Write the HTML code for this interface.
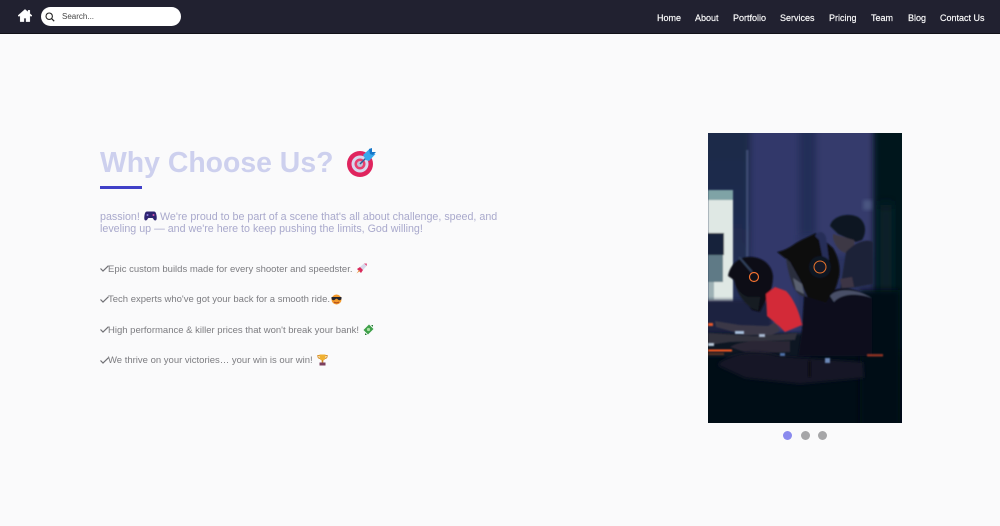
<!DOCTYPE html>
<html lang="en">
<head>
<meta charset="utf-8">
<title>Why Choose Us</title>
<style>
*{box-sizing:border-box;margin:0;padding:0}
html,body{width:1000px;height:526px;overflow:hidden;background:#fafafb;font-family:"Liberation Sans",sans-serif}
.abs{position:absolute}
header{position:absolute;left:0;top:0;width:1000px;height:34px;background:#212130;border-bottom:1px solid #111118}
.search{position:absolute;left:41px;top:7px;width:140px;height:19px;background:#fff;border-radius:10px}
.search span{position:absolute;left:21px;top:4px;font-size:8px;line-height:11px;color:#444}
nav a{position:absolute;top:12px;font-size:9px;line-height:12px;color:#fff;white-space:nowrap;text-decoration:none;-webkit-text-stroke:.15px #fff}
h1{position:absolute;left:100px;top:146px;font-size:28.4px;line-height:34px;font-weight:700;color:#cdd0ee;white-space:nowrap}
.bar{position:absolute;left:100px;top:186px;width:42px;height:2.500px;background:#4040c8}
.p{position:absolute;left:100px;font-size:10.7px;line-height:12px;color:#a9a9cc;white-space:nowrap}
.li{position:absolute;left:108px;font-size:9.5px;line-height:12px;color:#7c7c80;white-space:nowrap}
.dot{position:absolute;top:431px;width:9px;height:9px;border-radius:50%;background:#a6a6a8}
</style>
</head>
<body>
<header>
<svg class="abs" style="left:18px;top:9px" width="14" height="13" viewBox="0 0 16 14"><path d="M8 0 L0 7 L1 8.200 L2.500 7 V14 H6.800 V10 H9.200 V14 H13.500 V7 L15 8.200 L16 7 L13.500 4.800 V1 H11.500 V3 Z" fill="#fff" stroke="#fff" stroke-width=".5"/></svg>
<div class="search">
<svg class="abs" style="left:4px;top:5px" width="10" height="10" viewBox="0 0 10 10"><circle cx="4.200" cy="4.200" r="3.200" fill="none" stroke="#222" stroke-width="1.100"/><path d="M6.600 6.600 L9.200 9.200" stroke="#222" stroke-width="1.200"/></svg>
<span>Search...</span>
</div>
<nav>
<a href="#" style="left:657px">Home</a>
<a href="#" style="left:695px">About</a>
<a href="#" style="left:733px">Portfolio</a>
<a href="#" style="left:780px">Services</a>
<a href="#" style="left:829px">Pricing</a>
<a href="#" style="left:871px">Team</a>
<a href="#" style="left:908px">Blog</a>
<a href="#" style="left:940px">Contact Us</a>
</nav>
</header>

<h1>Why Choose Us?</h1>
<svg class="abs" style="left:345px;top:148px" width="31" height="30" viewBox="0 0 31 30">
<circle cx="15" cy="16" r="13" fill="#e0245e"/>
<circle cx="15" cy="16" r="8.500" fill="#d8d8ee"/>
<circle cx="15" cy="16" r="5.500" fill="#e8406e"/>
<circle cx="15" cy="16" r="3" fill="#c0c2d8"/>
<path d="M15 16 L25 6" stroke="#2a5f9a" stroke-width="1.500"/>
<path d="M18 7 L25 0.500 L26 5 L30.500 6 L24 13 L21 12 Z" fill="#38a8ec"/>
<path d="M24 1 L27 0 L27 4 L31 4 L28 7 L25 6 Z" fill="#1676c8"/>
</svg>
<div class="bar"></div>

<div class="p" style="top:211px">passion!</div>
<svg class="abs" style="left:144px;top:211px" width="13" height="10" viewBox="0 0 13 10"><path d="M3 0.500 H10 C11.500 0.500 12.200 2 12.600 5 C13 8 12.500 9.500 11.200 9.500 C9.800 9.500 9.500 7.500 8.500 7 H4.500 C3.500 7.500 3.200 9.500 1.800 9.500 C0.500 9.500 0 8 0.400 5 C0.800 2 1.500 0.500 3 0.500 Z" fill="#2e2470"/><circle cx="3.500" cy="4" r="1" fill="#8f7ce0"/><circle cx="9.500" cy="4" r="1" fill="#d65bb0"/></svg>
<div class="p" style="top:211px;left:160px">We're proud to be part of a scene that's all about challenge, speed, and</div>
<div class="p" style="top:223px">leveling up — and we're here to keep pushing the limits, God willing!</div>

<svg class="abs" style="left:100px;top:265px" width="9" height="7" viewBox="0 0 9 7"><path d="M0.500 3.500 L3 6 L8.500 0.700" fill="none" stroke="#6f6f74" stroke-width="1.200"/></svg>
<div class="li" style="top:264px">Epic custom builds made for every shooter and speedster.</div>
<svg class="abs" style="left:356px;top:263px" width="11" height="11" viewBox="0 0 11 11"><path d="M4 4 L8 0.500 L10.500 3 L7 7 Z" fill="#d8d8ea"/><path d="M8 0.500 H10.800 V3 Z" fill="#e0457a"/><path d="M1 6 L4 4 L7 7 L5 10 Z" fill="#d92a5c"/><path d="M0.500 10.500 L3 7 L4 8 Z" fill="#e8963a"/></svg>

<svg class="abs" style="left:100px;top:296px" width="9" height="7" viewBox="0 0 9 7"><path d="M0.500 3.500 L3 6 L8.500 0.700" fill="none" stroke="#6f6f74" stroke-width="1.200"/></svg>
<div class="li" style="top:294px">Tech experts who've got your back for a smooth ride.</div>
<svg class="abs" style="left:331px;top:294px" width="11" height="11" viewBox="0 0 11 11"><circle cx="5.500" cy="5.500" r="5" fill="#f39a2c"/><path d="M0.500 3 H10.500 V4.500 C10.500 6 8.500 6.500 7.500 6 L6 4.800 H5 L3.500 6 C2.500 6.500 0.500 6 0.500 4.500 Z" fill="#26242c"/><path d="M3 8 Q5.500 9.800 8 8" fill="none" stroke="#a5401e"/></svg>

<svg class="abs" style="left:100px;top:326px" width="9" height="7" viewBox="0 0 9 7"><path d="M0.500 3.500 L3 6 L8.500 0.700" fill="none" stroke="#6f6f74" stroke-width="1.200"/></svg>
<div class="li" style="top:325px">High performance &amp; killer prices that won't break your bank!</div>
<svg class="abs" style="left:363px;top:324px" width="11" height="11" viewBox="0 0 11 11"><path d="M0.500 6 L6 0.500 L10.500 5 L5 10.500 Z" fill="#3fa04a"/><circle cx="5.500" cy="5.500" r="1.600" fill="#a8e0a0"/><path d="M2 9 L4 11 H2 Z M8 1 L10 3 V1 Z" fill="#237a34"/></svg>

<svg class="abs" style="left:100px;top:357px" width="9" height="7" viewBox="0 0 9 7"><path d="M0.500 3.500 L3 6 L8.500 0.700" fill="none" stroke="#6f6f74" stroke-width="1.200"/></svg>
<div class="li" style="top:355px">We thrive on your victories… your win is our win!</div>
<svg class="abs" style="left:317px;top:354px" width="11" height="12" viewBox="0 0 11 12"><path d="M2.500 0.500 H8.500 V3 C8.500 5.500 7 6.500 5.500 6.500 C4 6.500 2.500 5.500 2.500 3 Z" fill="#f0b030"/><path d="M2.500 1.500 H0.800 C0.800 4 2 4.500 3 4.500 M8.500 1.500 H10.200 C10.200 4 9 4.500 8 4.500" fill="none" stroke="#d8922a"/><rect x="4.700" y="6" width="1.600" height="2.500" fill="#c98526"/><rect x="2.500" y="8.500" width="6" height="3" fill="#7c3f5e"/></svg>

<svg class="abs" style="left:708px;top:133px" width="194" height="290" viewBox="708 133 194 290">
<defs>
<filter id="b05" x="-20%" y="-20%" width="140%" height="140%"><feGaussianBlur stdDeviation="0.800"/></filter>
<filter id="b1" x="-20%" y="-20%" width="140%" height="140%"><feGaussianBlur stdDeviation="1.800"/></filter>
<filter id="b2" x="-30%" y="-30%" width="160%" height="160%"><feGaussianBlur stdDeviation="3"/></filter>
<filter id="b3" x="-30%" y="-30%" width="160%" height="160%"><feGaussianBlur stdDeviation="6"/></filter>
<linearGradient id="left" x1="0" y1="0" x2="0" y2="1"><stop offset="0" stop-color="#1a2a48"/><stop offset="1" stop-color="#262f58"/></linearGradient>
</defs>
<rect x="708" y="133" width="194" height="290" fill="#2b3360"/>
<g filter="url(#b2)">
<rect x="700" y="125" width="50" height="220" fill="url(#left)"/>
<rect x="752" y="125" width="46" height="220" fill="#31376a"/>
<rect x="800" y="125" width="15" height="110" fill="#242d58"/>
<rect x="817" y="125" width="56" height="130" fill="#353a6c"/>
</g>
<g filter="url(#b05)">
<rect x="746" y="150" width="2.500" height="170" fill="#54648e" opacity=".55"/>
<rect x="708" y="190" width="25" height="11" fill="#7fa3a6"/>
<rect x="708" y="200" width="25" height="102" fill="#dfe8e4"/>
<rect x="708" y="233" width="16" height="22" fill="#13233a"/>
<rect x="708" y="255" width="15" height="27" fill="#5f7a86"/>
<rect x="708" y="282" width="6" height="18" fill="#9db0b4"/>
</g>
<rect x="874" y="125" width="40" height="310" fill="#04191f" filter="url(#b2)"/>
<rect x="880" y="205" width="12" height="120" fill="#0a272f" filter="url(#b3)"/>
<rect x="863" y="200" width="9" height="10" fill="#5e6f96" opacity=".5" filter="url(#b1)"/>

<!-- lower backdrop -->
<rect x="700" y="300" width="72" height="34" fill="#1c2440" filter="url(#b1)"/>
<rect x="700" y="352" width="210" height="80" fill="#060e18" filter="url(#b2)"/>
<rect x="700" y="333" width="110" height="24" fill="#0e1422" filter="url(#b1)"/>
<rect x="860" y="290" width="40" height="140" fill="#050f15" filter="url(#b2)"/>

<g filter="url(#b05)">
<!-- back man -->
<path d="M830 226 C832 216 848 212 858 217 C866 222 867 232 862 240 L856 242 L838 234 Z" fill="#0e1424"/>
<path d="M833 234 L854 240 C856 246 850 252 846 253 C840 252 835 246 833 238 Z" fill="#3c3844"/>
<path d="M846 252 C854 243 866 238 873 242 L873 284 L840 290 Z" fill="#1e2438"/>
<path d="M840 279 L852 277 L854 287 L842 288 Z" fill="#3c3644"/>
<!-- front man head -->
<path d="M777 252 C786 250 790 247 796 243 C803 239 810 236 816 233 L833 248 C838 256 842 270 838 280 C836 290 830 300 826 303 L808 298 L800 280 L790 262 Z" fill="#08090f"/>
<path d="M786 258 L790 262 L800 280 L806 297 C800 297 796 292 793 286 C790 278 787 268 786 258 Z" fill="#2c2d3e"/>
<path d="M793 278 L802 284 L804 294 L796 290 Z" fill="#5a6070"/>
<path d="M815 236 C818 230 824 231 826 237 L829 260 L823 260 L819 240 Z" fill="#262d58"/>
<circle cx="820" cy="267" r="11" fill="#0e1424"/>
<!-- front man body -->
<path d="M804 296 L826 303 L834 290 C846 286 860 290 872 298 L872 356 L798 356 L802 330 Z" fill="#08101c"/>
<path d="M830 296 C836 288 856 288 872 298 C858 293 842 293 834 302 Z" fill="#484f68"/>
<!-- left man -->
<path d="M728 276 C730 263 742 255 753 257 C763 258 772 265 773 276 C773 284 771 292 768 296 L760 312 L752 310 C745 300 738 294 734 280 Z" fill="#0c1018"/>
<path d="M734 280 C736 288 742 296 748 297 L760 297 L758 310 C748 308 738 298 734 280 Z" fill="#181a24"/>
<path d="M739 257 L752 272" stroke="#33405c" stroke-width="2"/>
<!-- arms -->
<path d="M715 321 L740 325 L768 326 L776 322 L780 331 L772 335 L745 335 L716 327 Z" fill="#3a3746"/>
<path d="M708 333 L755 336 L797 333 L795 340 L730 342 L708 345 Z" fill="#33313e"/>
<path d="M730 347 C745 338 770 342 790 341 L790 352 L765 353 L745 352 Z" fill="#2a2736"/>
<!-- red shirt -->
<path d="M766 294 L775 287 L786 291 C795 300 800 315 802 325 L785 332 L778 325 L767 316 Z" fill="#d32c38"/>
</g>
<g filter="url(#b1)">
<path d="M717 365 C730 352 760 350 777 356 L863 362 L864 378 L800 384 L745 378 Z" fill="#181626"/>
</g>
<g filter="url(#b05)">
<rect x="708" y="323" width="5" height="3" fill="#e8592c"/>
<rect x="708" y="349.500" width="24" height="2" fill="#ff5a22"/>
<rect x="708" y="353" width="16" height="2" fill="#5c3024"/>
<rect x="708" y="343" width="6" height="3" fill="#b8c8d8"/>
<rect x="735" y="331" width="9" height="3" fill="#a8c0dc"/>
<rect x="759" y="334" width="6" height="3" fill="#a8b8d0"/>
<rect x="780" y="353" width="5" height="3" fill="#5070a8"/>
<rect x="825" y="358" width="5" height="5" fill="#6c88b8"/>
<rect x="867" y="354" width="16" height="2.500" fill="#8e3020"/>
<rect x="808" y="361" width="3" height="16" fill="#070a12"/>
</g>
<!-- earcups -->
<circle cx="754" cy="277" r="4.500" fill="#0e1018" stroke="#f07030" stroke-width="1.200"/>
<circle cx="820" cy="267" r="6" fill="#141826" stroke="#e8732c" stroke-width="1"/>
</svg>

<div class="dot" style="left:783px;background:#8a8aee"></div>
<div class="dot" style="left:800.500px"></div>
<div class="dot" style="left:818px"></div>
</body>
</html>
